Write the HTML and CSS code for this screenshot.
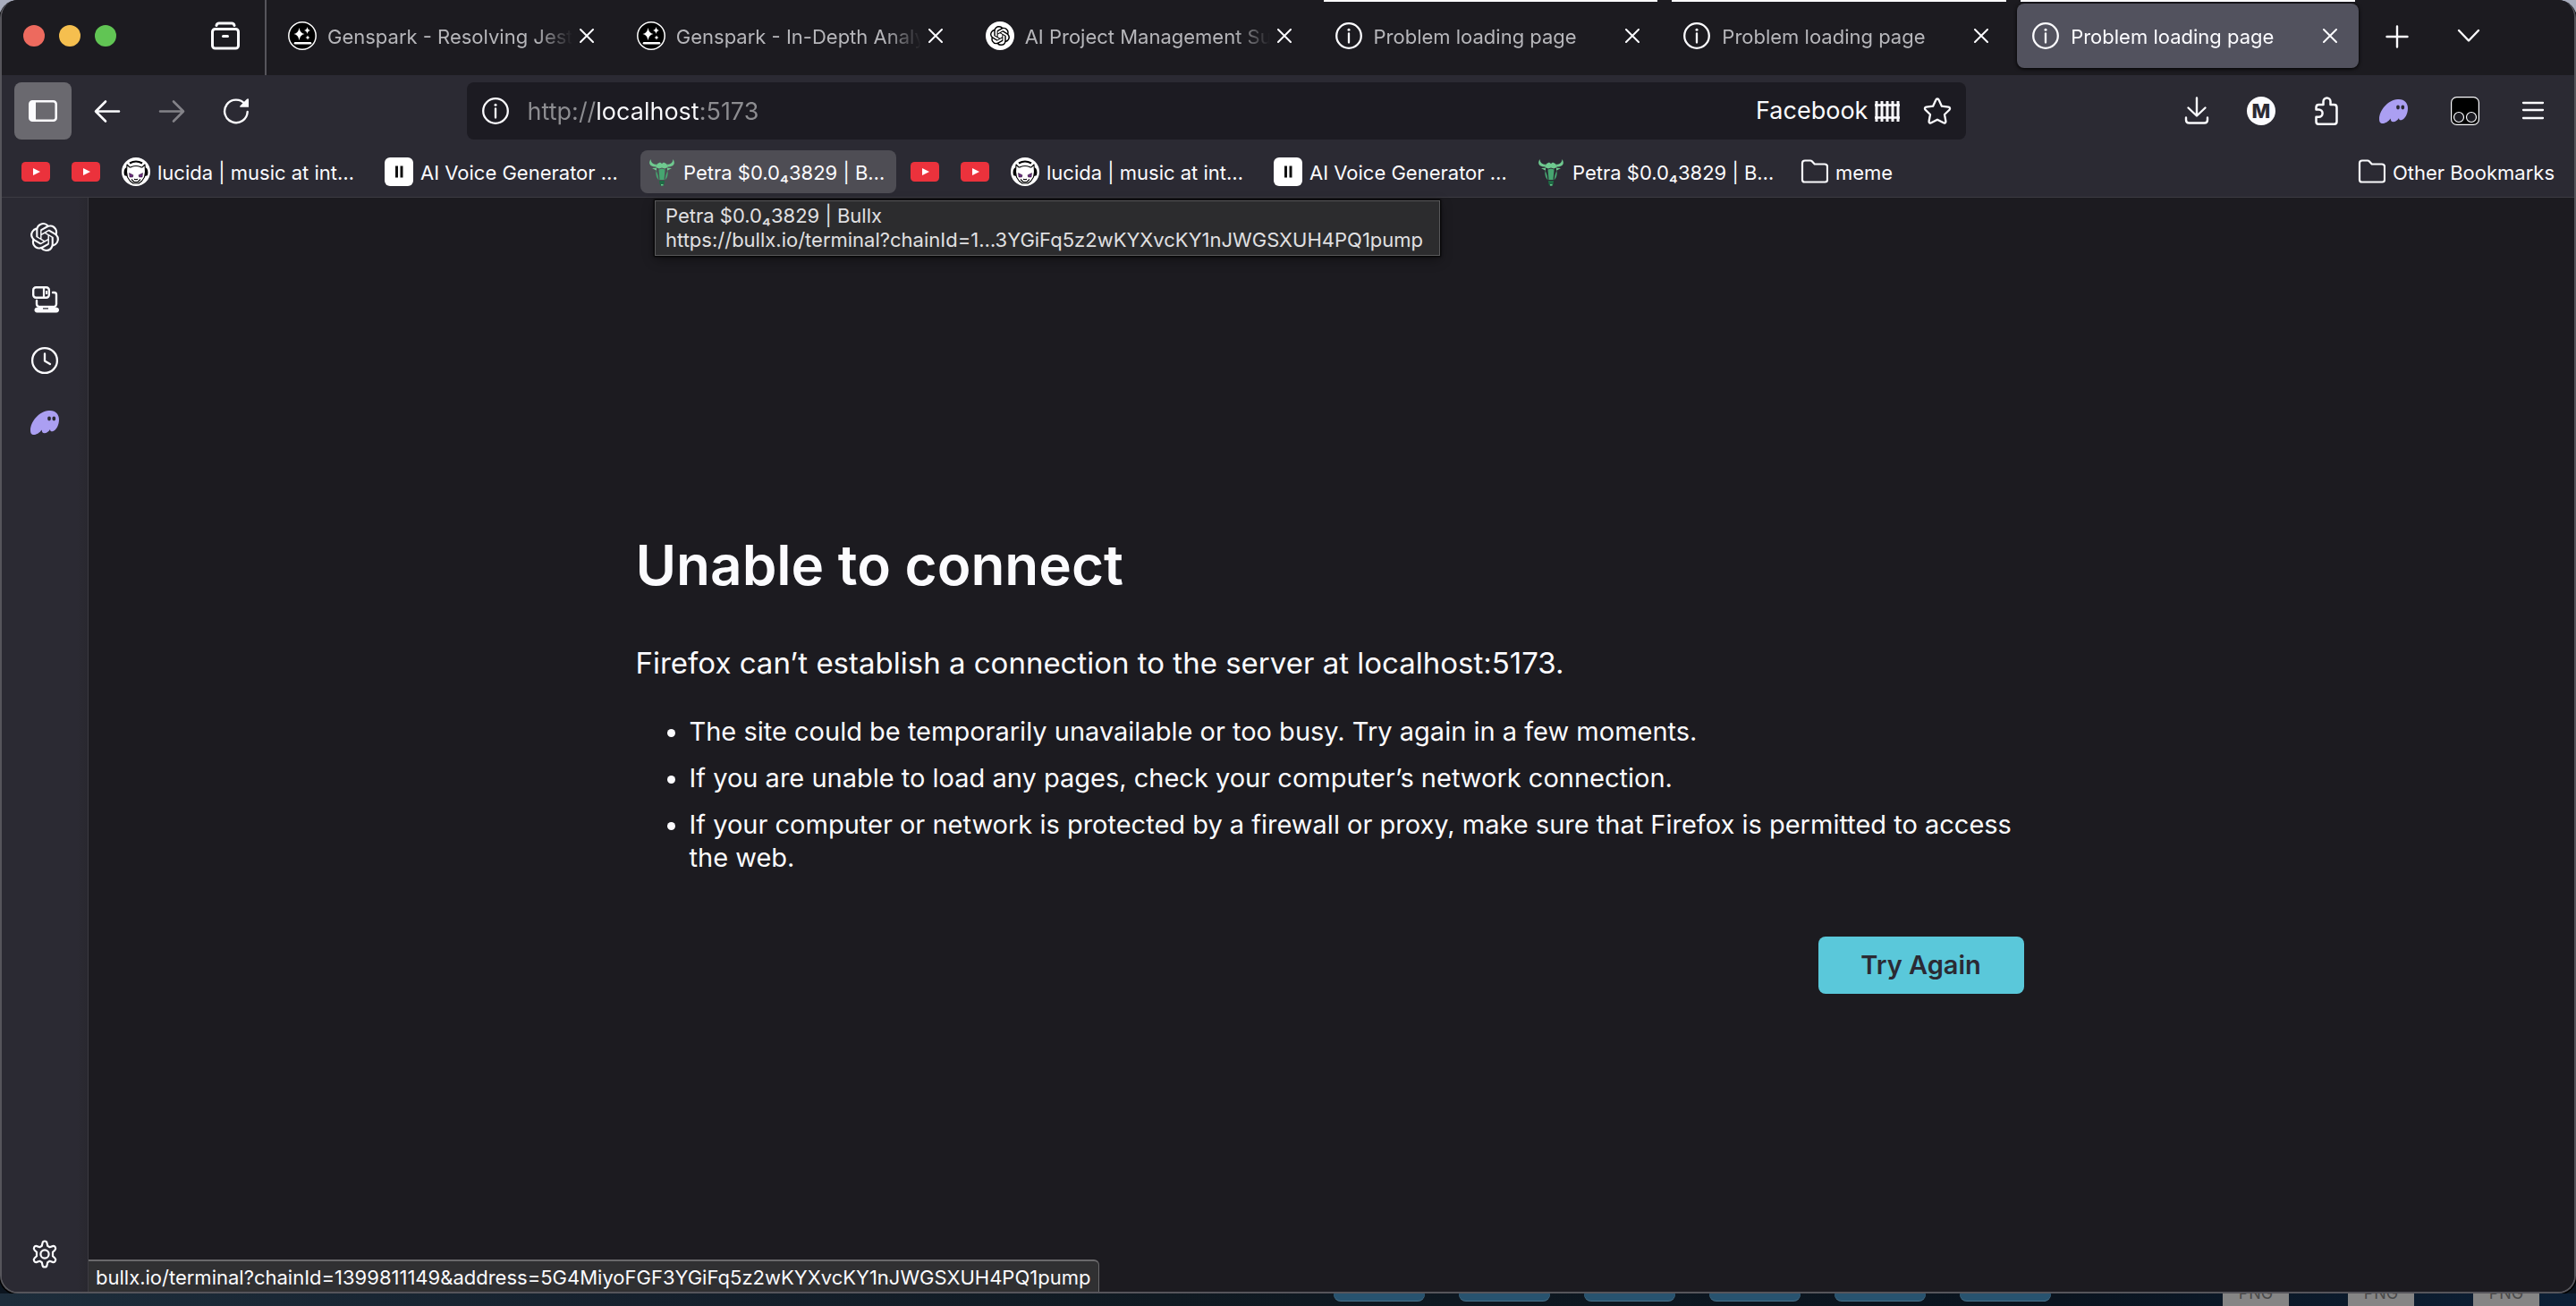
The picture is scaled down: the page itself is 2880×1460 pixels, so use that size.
FILE: index.html
```html
<!DOCTYPE html>
<html lang="en">
<head>
<meta charset="utf-8">
<meta name="viewport" content="width=device-width, initial-scale=1">
<title>Problem loading page</title>
<link rel="stylesheet" href="styles.css">
</head>
<body>
<svg class="sprite" aria-hidden="true">
  <symbol id="i-tabs" viewBox="0 0 32 32"><g fill="none" stroke="currentColor" stroke-width="3" stroke-linecap="round" stroke-linejoin="round"><rect x="1.500" y="8.500" width="29" height="21.500" rx="3"/><path d="M6 4.500Q6.500 2 9 2h14q2.500 0 3 2.500"/><path d="M13.500 16.500h5"/></g></symbol>
  <symbol id="i-close" viewBox="0 0 16 16"><path d="M1 1l14 14M15 1L1 15" fill="none" stroke="currentColor" stroke-width="2" stroke-linecap="round"/></symbol>
  <symbol id="i-info" viewBox="0 0 32 32"><circle cx="16" cy="16" r="13.800" fill="none" stroke="currentColor" stroke-width="2.300"/><circle cx="16" cy="9.300" r="1.500" fill="currentColor"/><path d="M16 13.500v10" stroke="currentColor" stroke-width="2.300" stroke-linecap="round"/></symbol>
  <symbol id="i-plus" viewBox="0 0 32 32"><path d="M16 4.500v23M4.500 16h23" stroke="currentColor" stroke-width="2.400" stroke-linecap="round"/></symbol>
  <symbol id="i-chevron" viewBox="0 0 32 32"><path d="M5 9l11 11.500L27 9" fill="none" stroke="currentColor" stroke-width="2.400" stroke-linecap="round" stroke-linejoin="round"/></symbol>
  <symbol id="i-sidebar" viewBox="0 0 32 32"><rect x="1.300" y="5.300" width="29.400" height="21.400" rx="3" fill="none" stroke="currentColor" stroke-width="2.600"/><path d="M2 6h6v20H2z" fill="currentColor"/></symbol>
  <symbol id="i-back" viewBox="0 0 32 32"><path d="M29 16.500H4M14 5.500l-11 11 11 11" fill="none" stroke="currentColor" stroke-width="2.600" stroke-linecap="round" stroke-linejoin="round"/></symbol>
  <symbol id="i-forward" viewBox="0 0 32 32"><path d="M3 16.500h25M18 5.500l11 11-11 11" fill="none" stroke="currentColor" stroke-width="2.600" stroke-linecap="round" stroke-linejoin="round"/></symbol>
  <symbol id="i-reload" viewBox="0 0 32 32"><path d="M26 8.500A12.800 12.800 0 1 0 28.700 17" fill="none" stroke="currentColor" stroke-width="2.400" stroke-linecap="round"/><path d="M30 3.200v8.600H21q-1.500-.3-.7-1.400l7.700-7.700q1.800-1 2 .5z" fill="currentColor"/></symbol>
  <symbol id="i-star" viewBox="0 0 32 32"><path d="M16 2.500c.9 0 1.400.5 1.700 1.200l3.200 7 7.500 1c1.700.2 2.200 1.900 1.100 3l-5.500 5.300 1.400 7.500c.3 1.500-1.200 2.500-2.500 1.800L16 25.700l-6.900 3.600c-1.300.7-2.800-.3-2.500-1.800L8 20l-5.500-5.300c-1.100-1.100-.6-2.800 1.100-3l7.500-1 3.200-7c.3-.7.8-1.200 1.700-1.200z" fill="none" stroke="currentColor" stroke-width="2.300" stroke-linejoin="round"/></symbol>
  <symbol id="i-fence" viewBox="0 0 28 28"><path d="M2 3v23M8 3v23M14 3v23M20 3v23M26 3v23" stroke="currentColor" stroke-width="3"/><path d="M0 7.500h28M0 21.500h28" stroke="currentColor" stroke-width="2.500"/></symbol>
  <symbol id="i-download" viewBox="0 0 32 32"><path d="M16 1.500V20M6.500 12.500L16 21.500l9.500-9M4 23.500V26q0 3.500 3.500 3.500h17Q28 29.500 28 26v-2.500" fill="none" stroke="currentColor" stroke-width="2.400" stroke-linecap="round" stroke-linejoin="round"/></symbol>
  <symbol id="i-puzzle" viewBox="0 0 32 32"><path d="M5.500 14.500V12q0-3 3-3h5V5.500a4 4 0 0 1 8 0V9h4q3 0 3 3v16q0 2.700-2.700 2.700H8q-2.500 0-2.500-2.700v-5.300h3a4 4 0 0 0 0-8.200z" fill="none" stroke="currentColor" stroke-width="2.500" stroke-linejoin="round"/></symbol>
  <symbol id="i-ghost" viewBox="0 0 32 32"><path d="M20.500 3C28 2.300 32 7 32 13c0 6-3 12-7 13.200-2 .5-3-.6-3-2.200-1.500 2.500-4 4.200-6.200 4.200-2.300 0-3.100-1.500-3.100-3.700C10.500 27.500 7 30 4 30c-3 0-4-2-4-5C.3 15 9.500 4 20.500 3z" fill="#ab9ff2"/><ellipse cx="21" cy="12" rx="1.900" ry="2.400" fill="#2b2a33"/><ellipse cx="26.300" cy="12" rx="1.900" ry="2.400" fill="#2b2a33"/></symbol>
  <symbol id="i-monkey" viewBox="0 0 32 32"><rect x=".6" y=".6" width="30.800" height="30.800" rx="6" fill="#000" stroke="#fbfbfe" stroke-width="1.200"/><circle cx="9" cy="23" r="5.500" fill="#1c1b22" stroke="#fbfbfe" stroke-width="1.200"/><circle cx="23" cy="23" r="5.500" fill="#1c1b22" stroke="#fbfbfe" stroke-width="1.200"/></symbol>
  <symbol id="i-menu" viewBox="0 0 32 32"><path d="M5 7h22M5 15h22M5 24h22" stroke="currentColor" stroke-width="2.300" stroke-linecap="round"/></symbol>
  <symbol id="i-folder" viewBox="0 0 32 32"><path d="M3 6.500q0-3 3-3h6q1 0 1.800.8l3 3.200H28q3 0 3 3v14.500q0 2.500-2.500 2.500h-23Q3 27.500 3 25z" fill="none" stroke="currentColor" stroke-width="2.200" stroke-linejoin="round"/></symbol>
  <symbol id="i-youtube" viewBox="0 0 32 32"><rect y="5" width="32" height="22" rx="4.500" fill="#eb323c"/><path d="M13 12l8 4-8 4z" fill="#fff"/></symbol>
  <symbol id="i-eleven" viewBox="0 0 32 32"><rect width="32" height="32" rx="6" fill="#fff"/><path d="M12 9.500h3v13h-3zM17.500 9.500h3v13h-3z" fill="#111"/></symbol>
  <symbol id="i-lucida" viewBox="0 0 32 32"><circle cx="16" cy="16" r="16" fill="#fff"/><path d="M9 6.500q7-4 14 0" fill="none" stroke="#000" stroke-width="2.200"/><path d="M6 8l2.500 2.500q1 1 2.500 0 5-2 10 0 1.500 1 2.500 0L26 8l.5 8-1 6-3 4.500-3.500 2.500h-6l-3.500-2.500-3-4.500-1-6z" fill="none" stroke="#000" stroke-width="1.100" stroke-linejoin="round"/><path d="M5.500 11q-4 2-2.500 9l3 1zM26.500 11q4 2 2.500 9l-3 1z" fill="#000"/><path d="M8.500 17.500l4.500 2.300-.7 2.200H9zM23.500 17.500L19 19.800l.7 2.200H23z" fill="#6d2d80" stroke="#1a0a20" stroke-width=".5"/><path d="M14 24.300q2 1 4 0M11 24.500l3 3h4l3-3" fill="none" stroke="#000" stroke-width="1.100"/></symbol>
  <symbol id="i-bull" viewBox="0 0 32 32"><path d="M3.500 2C1 6 1.500 10 9 10.500l1.500-2.700C7 8 4 6.500 3.500 2zM28.500 2C31 6 30.500 10 23 10.500l-1.500-2.700C25 8 28 6.500 28.500 2zM11 7l3-1.500 2 1.500 2-1.500L21 7l2 4-4 1.500-3-1-3 1L9 11zM5 12l5-.3v3zM27 12l-5-.3v3z" fill="#6fc98f"/><path d="M12.500 13.500l3.500-1 3.500 1L18.500 25h-5zM9.500 14.500l2 5 1 6q-4-4-3-11zM22.500 14.500l-2 5-1 6q4-4 3-11z" fill="#46a570"/><path d="M13 26h6l-.5 4-1.500 2h-2l-1.500-2z" fill="#1f6b45"/><path d="M15 30h2.500v1.500H15z" fill="#6fc98f"/></symbol>
  <symbol id="i-genspark" viewBox="0 0 32 32"><circle cx="16" cy="16" r="15.200" fill="#000" stroke="#fff" stroke-width="1.500"/><path d="M12.500 7q.9 6 6 7-5.100 1-6 7-.9-6-6-7 5.100-1 6-7zM21.500 6q.5 3.300 3.500 4-3 .7-3.500 4-.5-3.300-3.500-4 3-.7 3.500-4zM22 15.500q.4 2.100 2.500 2.500-2.100.4-2.500 2.500-.4-2.100-2.500-2.500 2.100-.4 2.500-2.500z" fill="#fff"/><path d="M8 24.300h17" stroke="#fff" stroke-width="2.600" stroke-linecap="round"/></symbol>
  <symbol id="i-openai" viewBox="0 0 24 24"><path fill="currentColor" d="M22.2819 9.8211a5.9847 5.9847 0 0 0-.5157-4.9108 6.0462 6.0462 0 0 0-6.5098-2.9A6.0651 6.0651 0 0 0 4.9807 4.1818a5.9847 5.9847 0 0 0-3.9977 2.9 6.0462 6.0462 0 0 0 .7427 7.0966 5.98 5.98 0 0 0 .511 4.9107 6.051 6.051 0 0 0 6.5146 2.9001A5.9847 5.9847 0 0 0 13.2599 24a6.0557 6.0557 0 0 0 5.7718-4.2058 5.9894 5.9894 0 0 0 3.9977-2.9001 6.0557 6.0557 0 0 0-.7475-7.0729zm-9.022 12.6081a4.4755 4.4755 0 0 1-2.8764-1.0408l.1419-.0804 4.7783-2.7582a.7948.7948 0 0 0 .3927-.6813v-6.7369l2.02 1.1686a.071.071 0 0 1 .038.052v5.5826a4.504 4.504 0 0 1-4.4945 4.4944zm-9.6607-4.1254a4.4708 4.4708 0 0 1-.5346-3.0137l.142.0852 4.783 2.7582a.7712.7712 0 0 0 .7806 0l5.8428-3.3685v2.3324a.0804.0804 0 0 1-.0332.0615L9.74 19.9502a4.4992 4.4992 0 0 1-6.1408-1.6464zM2.3408 7.8956a4.485 4.485 0 0 1 2.3655-1.9728V11.6a.7664.7664 0 0 0 .3879.6765l5.8144 3.3543-2.0201 1.1685a.0757.0757 0 0 1-.071 0l-4.8303-2.7865A4.504 4.504 0 0 1 2.3408 7.872zm16.5963 3.8558L13.1038 8.364 15.1192 7.2a.0757.0757 0 0 1 .071 0l4.8303 2.7913a4.4944 4.4944 0 0 1-.6765 8.1042v-5.6772a.79.79 0 0 0-.407-.667zm2.0107-3.0231l-.142-.0852-4.7735-2.7818a.7759.7759 0 0 0-.7854 0L9.409 9.2297V6.8974a.0662.0662 0 0 1 .0284-.0615l4.8303-2.7866a4.4992 4.4992 0 0 1 6.6802 4.66zM8.3065 12.863l-2.02-1.1638a.0804.0804 0 0 1-.038-.0567V6.0742a4.4992 4.4992 0 0 1 7.3757-3.4537l-.142.0805L8.704 5.459a.7948.7948 0 0 0-.3927.6813zm1.0976-2.3654l2.602-1.4998 2.6069 1.4998v2.9994l-2.5974 1.4997-2.6067-1.4997Z"/></symbol>
  <symbol id="i-devices" viewBox="0 0 32 32"><rect x="3.200" y="3.200" width="17.600" height="11.600" rx="3" fill="none" stroke="currentColor" stroke-width="2.400"/><path d="M15 3v12" stroke="currentColor" stroke-width="2.200"/><path d="M18 7v4" stroke="currentColor" stroke-width="2"/><path d="M25 9h1.500q2.500 0 2.500 2.500V22q0 2-2 3H9.500q-2.500-1-2.500-3v-4" fill="none" stroke="currentColor" stroke-width="2.400" stroke-linecap="round"/><path d="M7.500 25.500H14v2h6v-2h9q3 .5 3 3t-3 3H7.500q-3-.5-3-3t3-3z" fill="currentColor"/></symbol>
  <symbol id="i-clock" viewBox="0 0 32 32"><circle cx="16" cy="16" r="13.900" fill="none" stroke="currentColor" stroke-width="2.300"/><path d="M16 8.500v8l6 3.500" fill="none" stroke="currentColor" stroke-width="2.300" stroke-linecap="round" stroke-linejoin="round"/></symbol>
  <symbol id="i-gear" viewBox="0 0 32 32"><path d="M13.500 3.500q.3-2 2.500-2t2.500 2l.7 3.300 2.400 1.400 3.200-1.100q2-.6 3 1.200t-.4 3.200L25 13.800v4.400l2.400 2.300q1.400 1.400.4 3.200t-3 1.200l-3.200-1.100-2.400 1.400-.7 3.300q-.3 2-2.500 2t-2.500-2l-.7-3.300-2.400-1.400-3.200 1.100q-2 .6-3-1.200t.4-3.200L7 18.200v-4.400l-2.400-2.300q-1.400-1.400-.4-3.200t3-1.200l3.200 1.100 2.400-1.400z" fill="none" stroke="currentColor" stroke-width="2.200" stroke-linejoin="round"/><circle cx="16" cy="16" r="4.600" fill="none" stroke="currentColor" stroke-width="2.200"/></symbol>
</svg>

<div class="window">
  <header class="chrome">
    <div class="tabstrip">
      <div class="controls">
        <button class="light light-close" aria-label="Close window"></button>
        <button class="light light-min" aria-label="Minimize window"></button>
        <button class="light light-max" aria-label="Zoom window"></button>
      </div>
      <button class="icon-btn tabs-view" aria-label="View recent browsing"><svg class="icon"><use href="#i-tabs"/></svg></button>
      <div class="tabs" role="tablist">
        <div class="tab" role="tab"><svg class="icon"><use href="#i-genspark"/></svg><span class="tab-label">Genspark - Resolving Jest</span><button class="tab-close" aria-label="Close tab"><svg class="icon-small"><use href="#i-close"/></svg></button></div>
        <div class="tab" role="tab"><svg class="icon"><use href="#i-genspark"/></svg><span class="tab-label">Genspark - In-Depth Analy</span><button class="tab-close" aria-label="Close tab"><svg class="icon-small"><use href="#i-close"/></svg></button></div>
        <div class="tab" role="tab"><span class="openai-badge"><svg class="openai-mark"><use href="#i-openai"/></svg></span><span class="tab-label">AI Project Management Su</span><button class="tab-close" aria-label="Close tab"><svg class="icon-small"><use href="#i-close"/></svg></button></div>
        <div class="tab tab-lined" role="tab"><svg class="icon"><use href="#i-info"/></svg><span class="tab-label">Problem loading page</span><button class="tab-close" aria-label="Close tab"><svg class="icon-small"><use href="#i-close"/></svg></button></div>
        <div class="tab tab-lined" role="tab"><svg class="icon"><use href="#i-info"/></svg><span class="tab-label">Problem loading page</span><button class="tab-close" aria-label="Close tab"><svg class="icon-small"><use href="#i-close"/></svg></button></div>
        <div class="tab tab-lined tab-selected" role="tab" aria-selected="true"><svg class="icon"><use href="#i-info"/></svg><span class="tab-label">Problem loading page</span><button class="tab-close" aria-label="Close tab"><svg class="icon-small"><use href="#i-close"/></svg></button></div>
      </div>
      <div class="tab-actions">
        <button class="icon-btn" aria-label="New tab"><svg class="icon"><use href="#i-plus"/></svg></button>
        <button class="icon-btn" aria-label="List all tabs"><svg class="icon"><use href="#i-chevron"/></svg></button>
      </div>
    </div>

    <div class="toolbar">
      <button class="icon-btn is-pressed" aria-label="Sidebar"><svg class="icon"><use href="#i-sidebar"/></svg></button>
      <button class="icon-btn" aria-label="Back"><svg class="icon"><use href="#i-back"/></svg></button>
      <button class="icon-btn is-dimmed" aria-label="Forward"><svg class="icon"><use href="#i-forward"/></svg></button>
      <button class="icon-btn" aria-label="Reload"><svg class="icon"><use href="#i-reload"/></svg></button>
      <div class="spring"></div>
      <div class="urlbar">
        <svg class="icon"><use href="#i-info"/></svg>
        <input class="url-input" type="text" aria-label="Address" value="http://localhost:5173">
        <span class="container-name">Facebook<svg class="fence"><use href="#i-fence"/></svg></span>
        <button class="star" aria-label="Bookmark this page"><svg class="icon"><use href="#i-star"/></svg></button>
      </div>
      <div class="spring"></div>
      <button class="icon-btn" aria-label="Downloads"><svg class="icon"><use href="#i-download"/></svg></button>
      <button class="icon-btn" aria-label="Account"><span class="avatar">M</span></button>
      <button class="icon-btn" aria-label="Extensions"><svg class="icon"><use href="#i-puzzle"/></svg></button>
      <button class="icon-btn icon-btn-wide" aria-label="Phantom"><svg class="icon"><use href="#i-ghost"/></svg></button>
      <button class="icon-btn icon-btn-wide" aria-label="Tampermonkey"><svg class="icon"><use href="#i-monkey"/></svg></button>
      <button class="icon-btn" aria-label="Application menu"><svg class="icon"><use href="#i-menu"/></svg></button>
    </div>

    <nav class="bookmarks" aria-label="Bookmarks">
      <a class="bookmark" href="#" aria-label="YouTube"><svg class="icon"><use href="#i-youtube"/></svg></a>
      <a class="bookmark" href="#" aria-label="YouTube"><svg class="icon"><use href="#i-youtube"/></svg></a>
      <a class="bookmark" href="#"><svg class="icon"><use href="#i-lucida"/></svg><span class="bookmark-label">lucida | music at int…</span></a>
      <a class="bookmark" href="#"><svg class="icon"><use href="#i-eleven"/></svg><span class="bookmark-label">AI Voice Generator …</span></a>
      <div class="bookmark-anchor">
        <a class="bookmark is-hovered" href="#"><svg class="icon"><use href="#i-bull"/></svg><span class="bookmark-label">Petra $0.0₄3829 | B…</span></a>
        <div class="tooltip" role="tooltip"><div>Petra $0.0₄3829 | Bullx</div><div>https://bullx.io/terminal?chainId=1…3YGiFq5z2wKYXvcKY1nJWGSXUH4PQ1pump</div></div>
      </div>
      <a class="bookmark" href="#" aria-label="YouTube"><svg class="icon"><use href="#i-youtube"/></svg></a>
      <a class="bookmark" href="#" aria-label="YouTube"><svg class="icon"><use href="#i-youtube"/></svg></a>
      <a class="bookmark" href="#"><svg class="icon"><use href="#i-lucida"/></svg><span class="bookmark-label">lucida | music at int…</span></a>
      <a class="bookmark" href="#"><svg class="icon"><use href="#i-eleven"/></svg><span class="bookmark-label">AI Voice Generator …</span></a>
      <a class="bookmark" href="#"><svg class="icon"><use href="#i-bull"/></svg><span class="bookmark-label">Petra $0.0₄3829 | B…</span></a>
      <button class="bookmark"><svg class="icon"><use href="#i-folder"/></svg><span class="folder-label">meme</span></button>
      <button class="bookmark bookmark-last"><svg class="icon"><use href="#i-folder"/></svg><span class="folder-label">Other Bookmarks</span></button>
    </nav>
  </header>

  <div class="body">
    <aside class="sidebar">
      <button class="side-btn" aria-label="ChatGPT"><svg class="icon"><use href="#i-openai"/></svg></button>
      <button class="side-btn" aria-label="Synced tabs"><svg class="icon"><use href="#i-devices"/></svg></button>
      <button class="side-btn" aria-label="History"><svg class="icon"><use href="#i-clock"/></svg></button>
      <button class="side-btn" aria-label="Phantom"><svg class="icon"><use href="#i-ghost"/></svg></button>
      <button class="side-btn side-last" aria-label="Customize sidebar"><svg class="icon"><use href="#i-gear"/></svg></button>
    </aside>
    <main class="page">
      <div class="error">
        <h1 class="error-title">Unable to connect</h1>
        <p class="error-lead">Firefox can’t establish a connection to the server at localhost:5173.</p>
        <ul class="error-list">
          <li>The site could be temporarily unavailable or too busy. Try again in a few moments.</li>
          <li>If you are unable to load any pages, check your computer’s network connection.</li>
          <li>If your computer or network is protected by a firewall or proxy, make sure that Firefox is permitted to access the web.</li>
        </ul>
        <button class="retry">Try Again</button>
      </div>
      <div class="status">bullx.io/terminal?chainId=1399811149&amp;address=5G4MiyoFGF3YGiFq5z2wKYXvcKY1nJWGSXUH4PQ1pump</div>
    </main>
  </div>
</div>

<footer class="desktop">
  <span class="folder"></span><span class="folder"></span><span class="folder"></span><span class="folder"></span><span class="folder"></span><span class="folder"></span>
  <span class="file file-first">PNG</span><span class="file">PNG</span><span class="file">PNG</span>
</footer>
</body>
</html>
```

FILE: styles.css
```css
* { box-sizing: border-box; }

body {
  margin: 0;
  min-height: 100vh;
  display: flex;
  flex-direction: column;
  background: linear-gradient(#a9adbd 0, #a9adbd 100px, #0c151f 101px);
  color: #fbfbfe;
  font-family: Inter, "Liberation Sans", sans-serif;
  font-size: 22px;
  line-height: 32px;
}

button, input { font: inherit; color: inherit; background: none; border: 0; padding: 0; margin: 0; }
a { color: inherit; text-decoration: none; }
.sprite { display: none; }
.icon { width: 32px; height: 32px; flex: none; display: block; }
.icon-small { width: 16px; height: 16px; display: block; }

/* Window frame */
.window {
  flex: 1;
  display: flex;
  flex-direction: column;
  background: #1c1b20;
  border: solid #56555b;
  border-width: 0 2px 2px;
  border-radius: 20px;
  overflow: hidden;
  box-shadow: 0 1px 0 1px #000;
}

/* Tab strip */
.tabstrip { display: flex; align-items: stretch; height: 84px; background: #1c1b20; }
.controls { display: flex; align-items: center; gap: 16px; padding: 0 90px 4px 24px; }
.light { width: 24px; height: 24px; border-radius: 50%; }
.light-close { background: #ed6a5e; }
.light-min { background: #f5bf4f; }
.light-max { background: #61c554; }

.icon-btn {
  width: 64px;
  height: 64px;
  flex: none;
  display: flex;
  align-items: center;
  justify-content: center;
  border-radius: 8px;
}
.icon-btn-wide { width: 72px; }
.tabs-view { margin: 8px 12px 0 0; }

.tabs {
  flex: 1;
  display: grid;
  grid-template-columns: repeat(6, minmax(0, 1fr));
  gap: 8px;
  padding: 4px 0 8px 8px;
  border-left: 2px solid #56555b;
}
.tab {
  position: relative;
  display: flex;
  align-items: center;
  gap: 12px;
  padding: 0 24px 0 16px;
  border-radius: 8px;
  color: #b6b6ba;
}
.tab .icon { color: #fbfbfe; }
.tab-label {
  flex: 1;
  overflow: hidden;
  white-space: nowrap;
  margin-right: -12px;
  padding-top: 2px;
  mask-image: linear-gradient(to left, transparent 0, #000 40px);
}
.tab-close { width: 16px; height: 16px; margin: 0 0 0 8px; color: #fbfbfe; flex: none; }
.tab-lined::before {
  content: "";
  position: absolute;
  left: 4px;
  right: 4px;
  top: -4px;
  height: 2px;
  background: #fbfbfe;
}
.tab-selected { background: #52525e; color: #fbfbfe; box-shadow: 0 1px 4px #000; }
.tab-actions { display: flex; gap: 16px; padding: 9px 86px 0 11px; }

.openai-badge {
  width: 32px;
  height: 32px;
  flex: none;
  display: flex;
  align-items: center;
  justify-content: center;
  border-radius: 50%;
  background: #fff;
  color: #000;
}
.openai-mark { width: 22px; height: 22px; }

/* Navigation toolbar */
.toolbar { display: flex; gap: 8px; padding: 8px 14px 12px; background: #2b2a33; }
.is-pressed { background: #6a696f; }
.is-dimmed { color: #838288; }
.spring { flex: 1 1 4px; }
.urlbar {
  flex: 8;
  display: flex;
  align-items: center;
  height: 64px;
  padding: 0 16px;
  border-radius: 8px;
  background: #1c1b22;
  font-size: 27px;
}
.url-input {
  flex: 1;
  min-width: 0;
  height: 40px;
  margin-left: 20px;
  color: transparent;
  background: linear-gradient(to right, #8d8d91 0, #8d8d91 77px, #fbfbfe 77px, #fbfbfe 194px, #8d8d91 194px);
  background-clip: text;
  -webkit-background-clip: text;
}
.container-name { display: flex; align-items: center; gap: 8px; }
.fence { width: 28px; height: 28px; }
.star { margin-left: 26px; }
.avatar {
  width: 32px;
  height: 32px;
  border-radius: 50%;
  background: #fbfbfe;
  color: #2b2a33;
  font-weight: 800;
}

/* Bookmarks */
.bookmarks {
  display: flex;
  gap: 8px;
  padding: 0 14px 4px;
  background: #2b2a33;
  border-bottom: 1px solid #3c3b42;
  white-space: nowrap;
}
.bookmark {
  display: flex;
  align-items: center;
  gap: 8px;
  height: 48px;
  padding: 0 8px;
  border-radius: 8px;
}
.bookmark-label { width: 230px; padding-top: 2px; }
.folder-label { padding-top: 2px; }
.bookmark-last { margin-left: auto; }
.is-hovered { background: #4e4d54; }
.bookmark-anchor { position: relative; }
.tooltip {
  position: absolute;
  left: 16px;
  top: 56px;
  z-index: 2;
  padding: 3px 18px 3px 11px;
  background: #2c2c2e;
  border: 1px solid #59595b;
  box-shadow: 0 0 2px 1px #000, 0 4px 12px #0006;
  color: #e0e0e2;
  line-height: 27px;
}

/* Sidebar and page */
.body { flex: 1; display: flex; }
.sidebar {
  width: 96px;
  display: flex;
  flex-direction: column;
  align-items: center;
  gap: 5px;
  padding: 12px 0 10px;
  background: linear-gradient(to right, #2b2a33 84px, #29282f);
}
.side-btn { width: 64px; height: 64px; display: flex; align-items: center; justify-content: center; }
.side-last { margin-top: auto; }
.page {
  position: relative;
  flex: 1;
  padding: 371px 36px 200px 32px;
  border-left: 1px solid #3c3b42;
  background: #1c1b20;
}
.error { max-width: 1552px; margin: 0 auto; display: flex; flex-direction: column; }
.error-title { margin: 0; font-size: 62px; line-height: 80px; font-weight: 600; }
.error-lead { margin: 49px 0 0; font-size: 33px; line-height: 40px; }
.error-list {
  margin: 38px 0 0;
  padding-left: 60px;
  display: flex;
  flex-direction: column;
  gap: 15px;
  font-size: 29px;
  line-height: 37px;
}
.retry {
  align-self: flex-end;
  width: 230px;
  height: 64px;
  margin-top: 70px;
  border-radius: 8px;
  background: #5ac8da;
  color: #2b2a33;
  font-size: 29px;
  font-weight: 600;
}
.status {
  position: absolute;
  left: 0;
  bottom: 0;
  padding: 2px 9px 0 8px;
  border: solid #6a696b;
  border-width: 2px 1px 0 0;
  border-top-right-radius: 6px;
  background: #303032;
  white-space: nowrap;
}

/* Desktop showing below the window */
.desktop {
  height: 14px;
  display: flex;
  align-items: flex-start;
  justify-content: flex-end;
  gap: 38px;
  padding-right: 41px;
  overflow: hidden;
  background: linear-gradient(to right, #1d2d3b, #16212d 25%, #101a22 45%, #0a141f 80%, #0d2036);
}
.folder { width: 102px; height: 8px; border-radius: 0 0 8px 8px; background: #28536f; box-shadow: 0 1px 0 #4a7188; }
.file {
  width: 74px;
  height: 14px;
  margin-left: 28px;
  background: #858585;
  color: #4a4a4a;
  font-size: 18px;
  line-height: 0;
  text-align: center;
}
.file-first { margin-left: 154px; }
```
